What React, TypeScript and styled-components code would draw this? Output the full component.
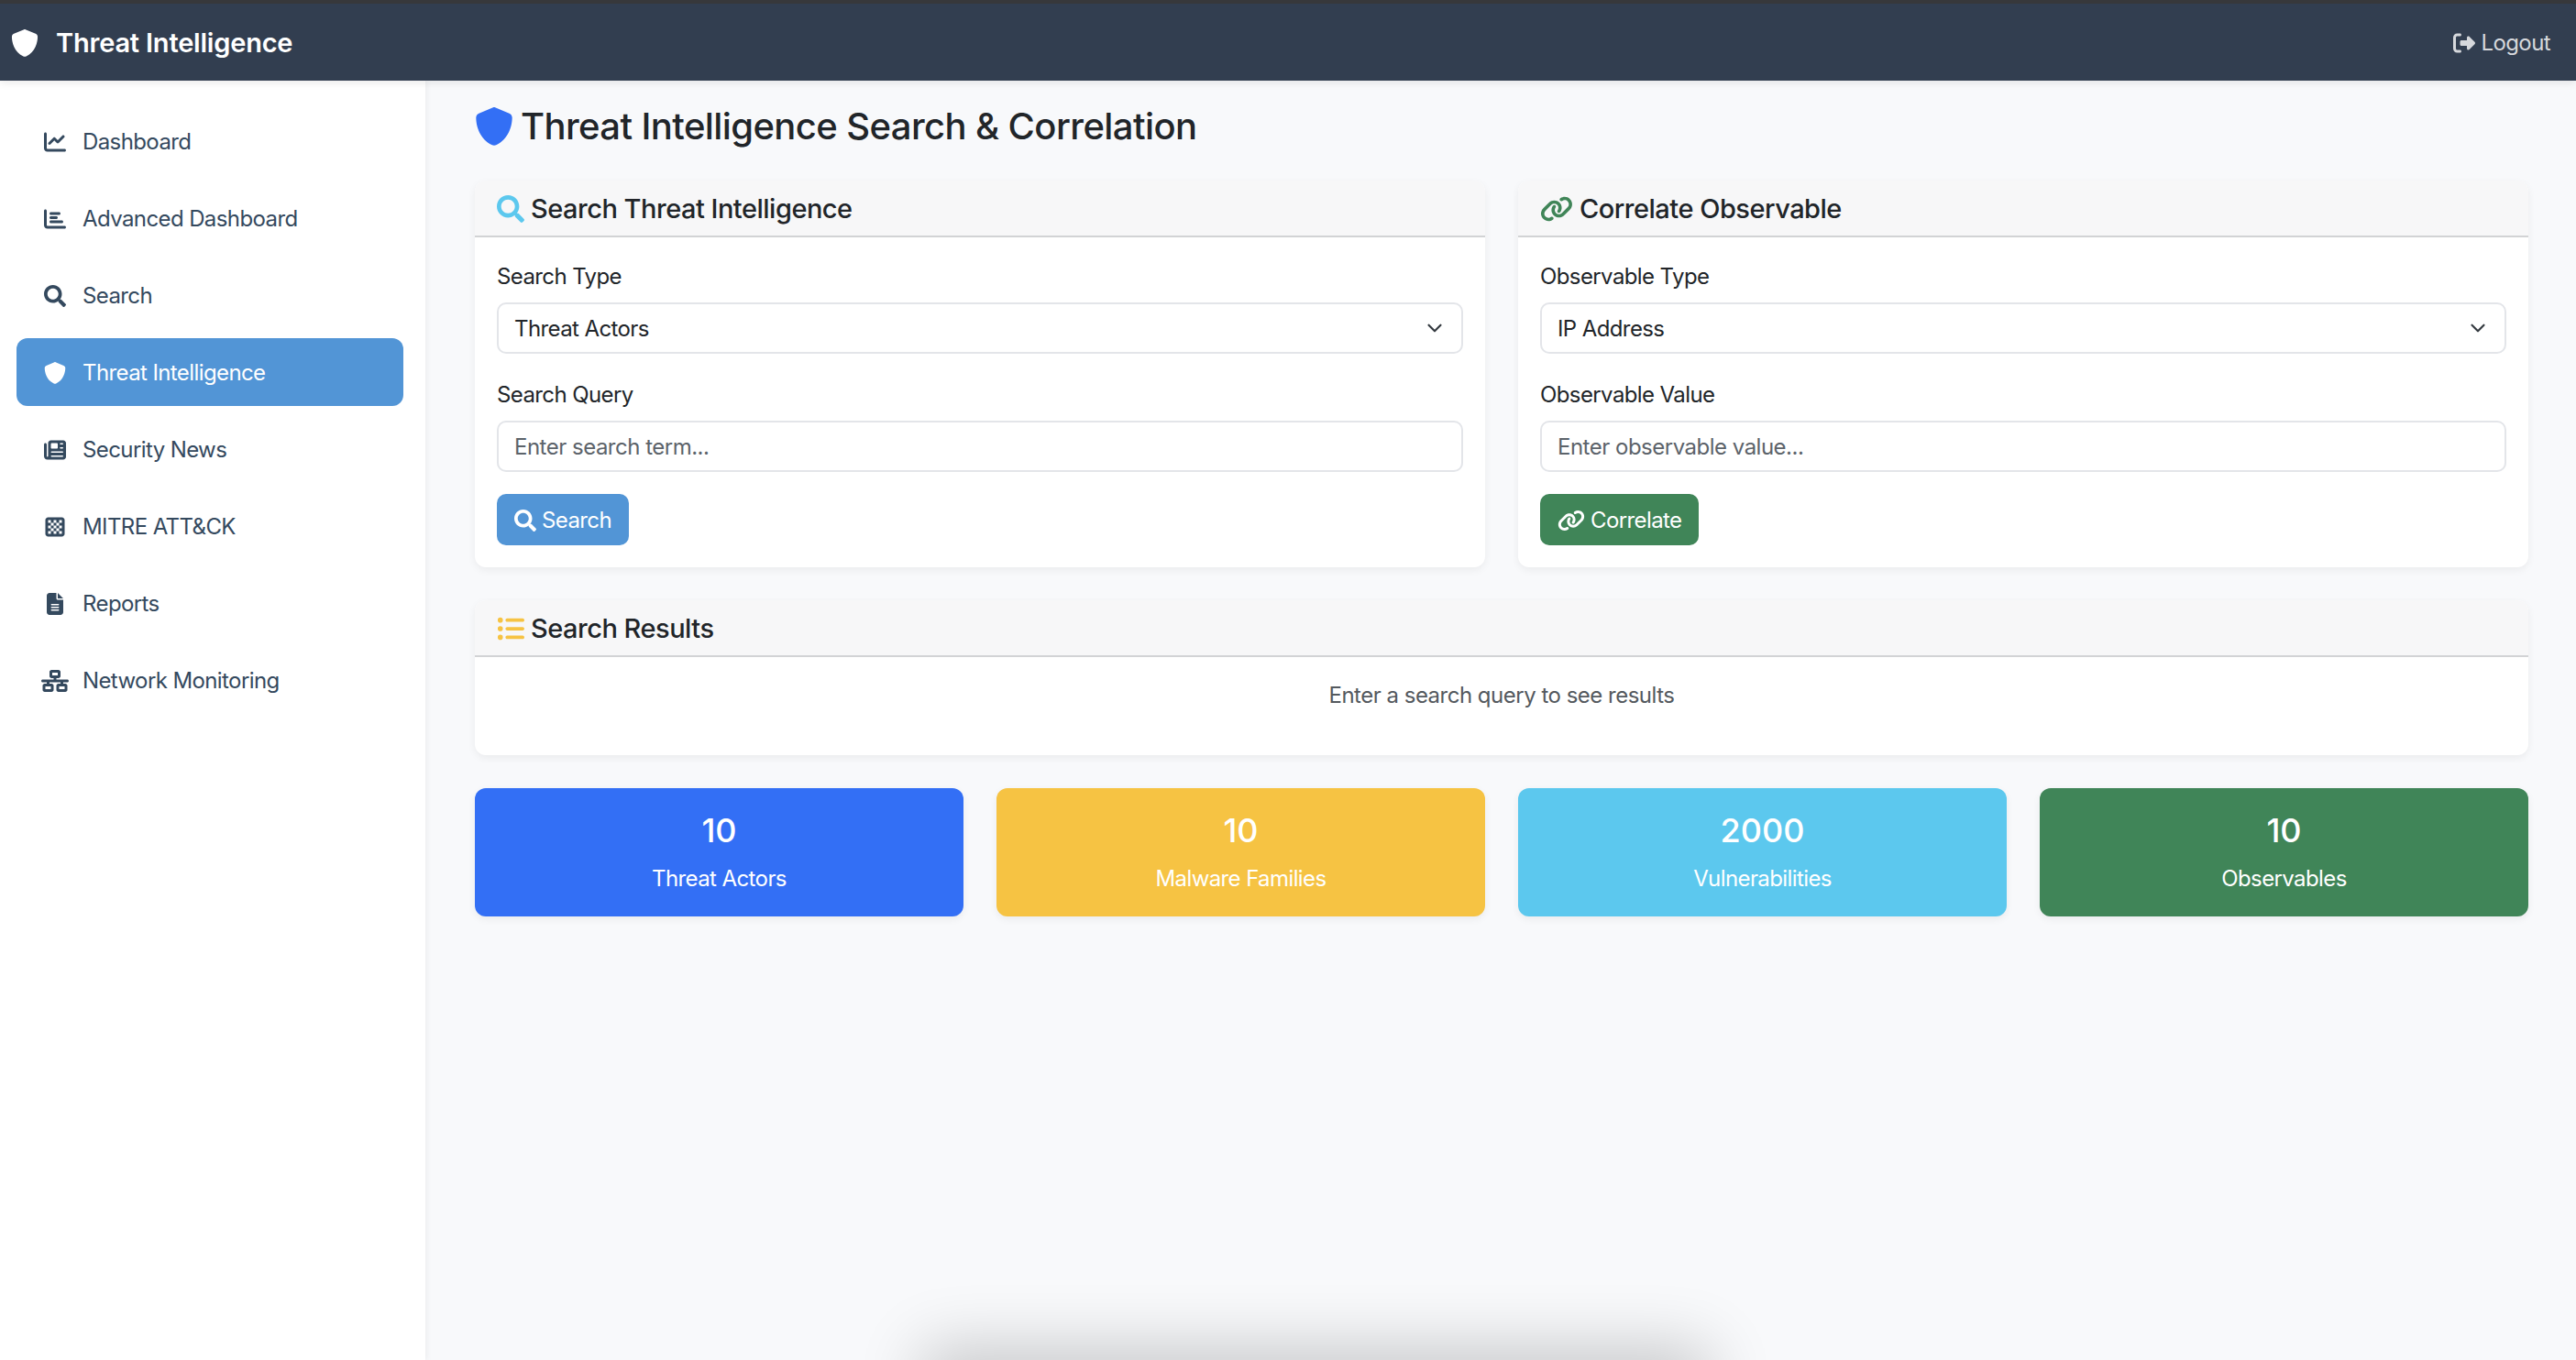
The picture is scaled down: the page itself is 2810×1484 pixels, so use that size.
import React from "react";
import styled, { createGlobalStyle } from "styled-components";
import { FaSearch } from "react-icons/fa";
import {
  FaChartBar,
  FaChartLine,
  FaChessBoard,
  FaFileLines,
  FaLink,
  FaListUl,
  FaNetworkWired,
  FaNewspaper,
  FaRightFromBracket,
  FaShield,
} from "react-icons/fa6";
import { LuChevronDown } from "react-icons/lu";

const GlobalStyle = createGlobalStyle`
  html, body {
    margin: 0;
    height: 100%;
    overflow: hidden;
  }
  body {
    background: #f8f9fb;
    color: #212529;
    font-family: Inter, "Liberation Sans", sans-serif;
    font-size: 24px;
    letter-spacing: -0.6px;
    line-height: 36px;
  }
  * {
    box-sizing: border-box;
  }
`;

const navItems = [
  { label: "Dashboard", icon: <FaChartLine /> },
  { label: "Advanced Dashboard", icon: <FaChartBar /> },
  { label: "Search", icon: <FaSearch /> },
  { label: "Threat Intelligence", icon: <FaShield />, active: true },
  { label: "Security News", icon: <FaNewspaper /> },
  { label: "MITRE ATT&CK", icon: <FaChessBoard /> },
  { label: "Reports", icon: <FaFileLines /> },
  { label: "Network Monitoring", icon: <FaNetworkWired />, wide: true },
];

const stats = [
  { value: "10", label: "Threat Actors", color: "#336ff5" },
  { value: "10", label: "Malware Families", color: "#f6c343" },
  { value: "2000", label: "Vulnerabilities", color: "#5cc8ee" },
  { value: "10", label: "Observables", color: "#408558" },
];

const App: React.FC = () => {
  return (
    <Page>
      <GlobalStyle />
      <TopBar>
        <Brand>
          <BrandIcon>
            <FaShield />
          </BrandIcon>
          Threat Intelligence
        </Brand>
        <LogoutLink>
          <FaRightFromBracket />
          Logout
        </LogoutLink>
      </TopBar>
      <Body>
        <Sidebar>
          {navItems.map((item) => (
            <NavItem key={item.label} $active={item.active}>
              <NavIcon $wide={item.wide}>{item.icon}</NavIcon>
              {item.label}
            </NavItem>
          ))}
        </Sidebar>
        <Main>
          <PageTitle>
            <FaShield />
            Threat Intelligence Search &amp; Correlation
          </PageTitle>
          <TwoColumns>
            <Card>
              <CardHeader $iconColor="#5cc8ee" $iconSize={30}>
                <FaSearch />
                Search Threat Intelligence
              </CardHeader>
              <CardBody>
                <FieldLabel>Search Type</FieldLabel>
                <SelectWrap>
                  <Select defaultValue="actors">
                    <option value="actors">Threat Actors</option>
                  </Select>
                  <LuChevronDown />
                </SelectWrap>
                <FieldLabel>Search Query</FieldLabel>
                <TextInput placeholder="Enter search term..." />
                <ActionButton $color="#5295d6" $iconSize={24}>
                  <FaSearch />
                  Search
                </ActionButton>
              </CardBody>
            </Card>
            <Card>
              <CardHeader $iconColor="#408558" $iconSize={36}>
                <FaLink />
                Correlate Observable
              </CardHeader>
              <CardBody>
                <FieldLabel>Observable Type</FieldLabel>
                <SelectWrap>
                  <Select defaultValue="ip">
                    <option value="ip">IP Address</option>
                  </Select>
                  <LuChevronDown />
                </SelectWrap>
                <FieldLabel>Observable Value</FieldLabel>
                <TextInput placeholder="Enter observable value..." />
                <ActionButton $color="#408558" $iconSize={30}>
                  <FaLink />
                  Correlate
                </ActionButton>
              </CardBody>
            </Card>
          </TwoColumns>
          <Card>
            <CardHeader $iconColor="#f6c343" $iconSize={30}>
              <FaListUl />
              Search Results
            </CardHeader>
            <EmptyResults>Enter a search query to see results</EmptyResults>
          </Card>
          <StatsRow>
            {stats.map((stat) => (
              <StatCard key={stat.label} $color={stat.color}>
                <StatValue>{stat.value}</StatValue>
                <StatLabel>{stat.label}</StatLabel>
              </StatCard>
            ))}
          </StatsRow>
        </Main>
      </Body>
      <BottomGlow />
    </Page>
  );
};

const Page = styled.div`
  display: flex;
  flex-direction: column;
  height: 100vh;
  overflow: hidden;
  position: relative;
`;

const TopBar = styled.header`
  align-items: center;
  background: #323e50;
  border-top: 4px solid #37383b;
  box-shadow: 0 3px 8px rgba(0, 0, 0, 0.08);
  color: #fff;
  display: flex;
  flex: 0 0 88px;
  justify-content: space-between;
  padding: 2px 28px 0 12px;
  position: relative;
  z-index: 2;
`;

const Brand = styled.div`
  align-items: center;
  display: flex;
  font-size: 29px;
  font-weight: 600;
  letter-spacing: -0.2px;
`;

const BrandIcon = styled.span`
  display: flex;
  font-size: 30px;
  margin-right: 19px;
`;

const LogoutLink = styled.a`
  align-items: center;
  color: #d6d8dc;
  display: flex;
  gap: 6px;

  svg {
    font-size: 24px;
  }
`;

const Body = styled.div`
  display: flex;
  flex: 1;
  min-height: 0;
`;

const Sidebar = styled.nav`
  background: #fff;
  box-shadow: 2px 0 6px rgba(0, 0, 0, 0.05);
  display: flex;
  flex: 0 0 464px;
  flex-direction: column;
  gap: 10px;
  padding: 29px 24px 0 18px;
`;

const NavItem = styled.a<{ $active?: boolean }>`
  align-items: center;
  background: ${(p) => (p.$active ? "#5295d6" : "transparent")};
  border-radius: 12px;
  color: ${(p) => (p.$active ? "#fff" : "#34495e")};
  display: flex;
  height: 74px;
  padding: 1px 0 0 27px;
`;

const NavIcon = styled.span<{ $wide?: boolean }>`
  display: flex;
  flex: 0 0 30px;
  font-size: ${(p) => (p.$wide ? 30 : 24)}px;
  justify-content: center;
  margin-right: 15px;
`;

const Main = styled.main`
  display: flex;
  flex: 1;
  flex-direction: column;
  padding: 0 52px 0 54px;
`;

const PageTitle = styled.h2`
  align-items: center;
  color: #212529;
  display: flex;
  font-size: 40px;
  font-weight: 500;
  gap: 8px;
  height: 60px;
  letter-spacing: -0.6px;
  line-height: 48px;
  margin: 20px 0 29px;

  svg {
    color: #336ff5;
    font-size: 42px;
  }
`;

const TwoColumns = styled.div`
  display: grid;
  gap: 36px;
  grid-template-columns: 1fr 1fr;
  margin-bottom: 36px;
`;

const Card = styled.section`
  background: #fff;
  border-radius: 12px;
  box-shadow: 0 3px 9px rgba(0, 0, 0, 0.06);
  overflow: hidden;
`;

const CardHeader = styled.h5<{ $iconColor: string; $iconSize: number }>`
  align-items: center;
  background: #f7f7f8;
  border-bottom: 2px solid #d2d3d5;
  display: flex;
  font-size: 29px;
  font-weight: 500;
  gap: 7px;
  height: 62px;
  letter-spacing: -0.5px;
  margin: 0;
  padding: 2px 24px 0;

  svg {
    color: ${(p) => p.$iconColor};
    font-size: ${(p) => p.$iconSize}px;
  }
`;

const CardBody = styled.div`
  display: flex;
  flex-direction: column;
  padding: 24px 24px 24px;
`;

const FieldLabel = styled.label`
  display: block;
  height: 36px;
  margin-bottom: 11px;
  padding-top: 1px;
`;

const SelectWrap = styled.div`
  margin-bottom: 26px;
  position: relative;

  svg {
    color: #343a40;
    font-size: 26px;
    pointer-events: none;
    position: absolute;
    right: 18px;
    top: 15px;
  }
`;

const Select = styled.select`
  appearance: none;
  background: #fff;
  border: 2px solid #e3e5e9;
  border-radius: 10px;
  color: #212529;
  display: block;
  font: inherit;
  height: 56px;
  letter-spacing: inherit;
  padding: 2px 17px 0;
  width: 100%;
`;

const TextInput = styled.input`
  background: #fff;
  border: 2px solid #e3e5e9;
  border-radius: 10px;
  color: #212529;
  display: block;
  font: inherit;
  height: 56px;
  letter-spacing: -0.5px;
  margin-bottom: 24px;
  padding: 0 17px;
  width: 100%;

  &::placeholder {
    color: #5c636a;
    opacity: 1;
  }
`;

const ActionButton = styled.button<{ $color: string; $iconSize: number }>`
  align-items: center;
  align-self: flex-start;
  background: ${(p) => p.$color};
  border: 0;
  border-radius: 10px;
  color: #fff;
  display: flex;
  font: inherit;
  gap: 6px;
  height: 56px;
  letter-spacing: inherit;
  padding: 1px 19px 0;

  svg {
    font-size: ${(p) => p.$iconSize}px;
  }
`;

const EmptyResults = styled.div`
  color: #54595e;
  height: 107px;
  letter-spacing: -0.5px;
  padding-top: 24px;
  text-align: center;
`;

const StatsRow = styled.div`
  display: grid;
  gap: 36px;
  grid-template-columns: repeat(4, 1fr);
  margin-top: 36px;
`;

const StatCard = styled.div<{ $color: string }>`
  background: ${(p) => p.$color};
  border-radius: 12px;
  box-shadow: 0 3px 9px rgba(0, 0, 0, 0.06);
  color: #fff;
  height: 140px;
  padding-top: 22px;
  text-align: center;
`;

const StatValue = styled.div`
  font-size: 36px;
  font-weight: 500;
  letter-spacing: 0;
  line-height: 48px;
`;

const StatLabel = styled.div`
  line-height: 36px;
  margin-top: 11px;
`;

// soft shadow from something sitting just under the bottom edge of the window
const BottomGlow = styled.div`
  bottom: -50px;
  box-shadow: 0 0 70px 14px rgba(0, 0, 0, 0.2);
  height: 50px;
  left: 1020px;
  position: absolute;
  width: 830px;
`;

export default App;
